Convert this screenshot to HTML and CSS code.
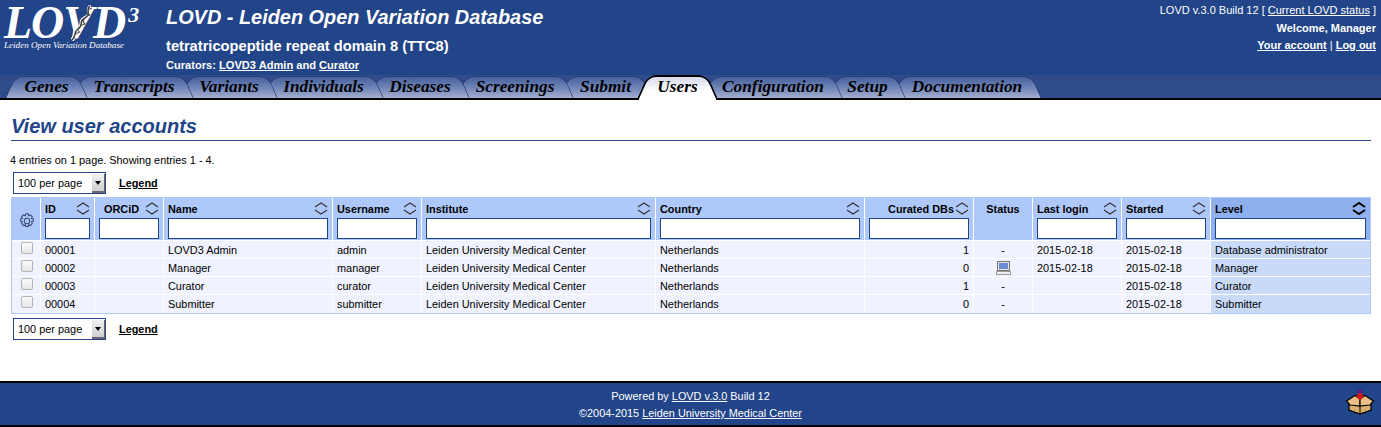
FILE: index.html
```html
<!DOCTYPE html>
<html lang="en">
<head>
    <meta charset="UTF-8">
    <title>LOVD - Leiden Open Variation Database</title>
    <link rel="stylesheet" href="styles.css">
</head>
<body>
    <div class="header">
        <div class="logo">
            <div class="logo-word">LOVD<sup class="logo-three">3</sup></div>
            <div class="logo-sub">Leiden Open Variation Database</div>
            <svg class="logo-helix" width="24" height="36" viewBox="0 0 24 36">
                <path d="M21 1 C15 5 24 9 15 13 C8 16 15 21 8 24 C2 27 7 31 2 35" fill="none" stroke="#fff" stroke-width="4"/>
                <path d="M20 1 C15 5 22 9 15 13 C8 16 14 21 8 24 C3 27 7 31 2 35" fill="none" stroke="#333" stroke-width="1.4"/>
                <path d="M22 3 C17 4 17 9 20 10 C13 12 12 17 15 19 C8 21 6 26 10 27 C5 28 3 31 4 34" fill="none" stroke="#555" stroke-width="1.2"/>
            </svg>
        </div>
        <div class="project">
            <h1>LOVD - Leiden Open Variation Database</h1>
            <h2>tetratricopeptide repeat domain 8 (TTC8)</h2>
            <div class="curators">Curators: <a href="#">LOVD3 Admin</a> and <a href="#">Curator</a></div>
        </div>
        <div class="account">
            <div class="version">LOVD v.3.0 Build 12 [ <a href="#">Current LOVD status</a> ]</div>
            <div class="strong">Welcome, Manager</div>
            <div class="strong"><a href="#">Your account</a> <span class="thin">|</span> <a href="#">Log out</a></div>
        </div>
    </div>

    <div class="tabbar">
        <div class="tabs">
            <a class="tab" href="#"><span>Genes</span></a>
            <a class="tab" href="#"><span>Transcripts</span></a>
            <a class="tab" href="#"><span>Variants</span></a>
            <a class="tab" href="#"><span>Individuals</span></a>
            <a class="tab" href="#"><span>Diseases</span></a>
            <a class="tab" href="#"><span>Screenings</span></a>
            <a class="tab" href="#"><span>Submit</span></a>
            <a class="tab active" href="#"><span>Users</span></a>
            <a class="tab" href="#"><span>Configuration</span></a>
            <a class="tab" href="#"><span>Setup</span></a>
            <a class="tab" href="#"><span>Documentation</span></a>
        </div>
    </div>

    <div class="main">
        <h3 class="page-title">View user accounts</h3>
        <div class="entries">4 entries on 1 page. Showing entries 1 - 4.</div>

        <div class="pager">
            <div class="select"><span class="select-text">100 per page</span><span class="select-arrow"></span></div>
            <a class="legend" href="#">Legend</a>
        </div>

        <div class="table-wrap">
            <table class="data">
                <colgroup>
                    <col class="c-check"><col class="c-id"><col class="c-orcid"><col class="c-name"><col class="c-user">
                    <col class="c-inst"><col class="c-country"><col class="c-dbs"><col class="c-status"><col class="c-login">
                    <col class="c-started"><col class="c-level">
                </colgroup>
                <thead>
                    <tr>
                        <th class="gear-cell">
                            <svg width="16" height="16" viewBox="0 0 20 20">
                                <path d="M8.5 1 h3 l.5 2.4 2.2-1 2.4 2.4-1 2.2 2.4.5 v3 l-2.4.6 1 2.2-2.4 2.4-2.2-1-.5 2.3 h-3 l-.6-2.3-2.2 1-2.4-2.4 1-2.2-2.3-.6 v-3 l2.3-.5-1-2.2 2.4-2.4 2.2 1z" fill="none" stroke="#3a4a78" stroke-width="1.3"/>
                                <circle cx="10" cy="10" r="3.4" fill="none" stroke="#3a4a78" stroke-width="1.3"/>
                            </svg>
                        </th>
                        <th><div class="head"><span>ID</span><svg class="sort" viewBox="0 0 14 13"><path d="M1 5 L7 1 L13 5 M1 8 L7 12 L13 8" fill="none" stroke="#333" stroke-width="1.1"/></svg></div><input class="filter" type="text"></th>
                        <th class="indent"><div class="head"><span>ORCiD</span><svg class="sort" viewBox="0 0 14 13"><path d="M1 5 L7 1 L13 5 M1 8 L7 12 L13 8" fill="none" stroke="#333" stroke-width="1.1"/></svg></div><input class="filter" type="text"></th>
                        <th><div class="head"><span>Name</span><svg class="sort" viewBox="0 0 14 13"><path d="M1 5 L7 1 L13 5 M1 8 L7 12 L13 8" fill="none" stroke="#333" stroke-width="1.1"/></svg></div><input class="filter" type="text"></th>
                        <th><div class="head"><span>Username</span><svg class="sort" viewBox="0 0 14 13"><path d="M1 5 L7 1 L13 5 M1 8 L7 12 L13 8" fill="none" stroke="#333" stroke-width="1.1"/></svg></div><input class="filter" type="text"></th>
                        <th><div class="head"><span>Institute</span><svg class="sort" viewBox="0 0 14 13"><path d="M1 5 L7 1 L13 5 M1 8 L7 12 L13 8" fill="none" stroke="#333" stroke-width="1.1"/></svg></div><input class="filter" type="text"></th>
                        <th><div class="head"><span>Country</span><svg class="sort" viewBox="0 0 14 13"><path d="M1 5 L7 1 L13 5 M1 8 L7 12 L13 8" fill="none" stroke="#333" stroke-width="1.1"/></svg></div><input class="filter" type="text"></th>
                        <th><div class="head head-right"><span>Curated DBs</span><svg class="sort" viewBox="0 0 14 13"><path d="M1 5 L7 1 L13 5 M1 8 L7 12 L13 8" fill="none" stroke="#333" stroke-width="1.1"/></svg></div><input class="filter" type="text"></th>
                        <th class="status-head"><div class="head head-center"><span>Status</span></div></th>
                        <th><div class="head"><span>Last login</span><svg class="sort" viewBox="0 0 14 13"><path d="M1 5 L7 1 L13 5 M1 8 L7 12 L13 8" fill="none" stroke="#333" stroke-width="1.1"/></svg></div><input class="filter" type="text"></th>
                        <th><div class="head"><span>Started</span><svg class="sort" viewBox="0 0 14 13"><path d="M1 5 L7 1 L13 5 M1 8 L7 12 L13 8" fill="none" stroke="#333" stroke-width="1.1"/></svg></div><input class="filter" type="text"></th>
                        <th class="sorted"><div class="head"><span>Level</span><svg class="sort" viewBox="0 0 14 13"><path d="M1 5 L7 1 L13 5 M1 8 L7 12 L13 8" fill="none" stroke="#000" stroke-width="2"/></svg></div><input class="filter" type="text"></th>
                    </tr>
                </thead>
                <tbody>
                    <tr>
                        <td class="check"><input class="box" type="checkbox"></td>
                        <td>00001</td><td></td><td>LOVD3 Admin</td><td>admin</td>
                        <td>Leiden University Medical Center</td><td>Netherlands</td>
                        <td class="right">1</td><td class="center">-</td><td>2015-02-18</td><td>2015-02-18</td>
                        <td class="sorted-cell">Database administrator</td>
                    </tr>
                    <tr>
                        <td class="check"><input class="box" type="checkbox"></td>
                        <td>00002</td><td></td><td>Manager</td><td>manager</td>
                        <td>Leiden University Medical Center</td><td>Netherlands</td>
                        <td class="right">0</td>
                        <td class="center">
                            <svg class="online" width="15" height="14" viewBox="0 0 15 14">
                                <rect x="1.5" y=".5" width="12" height="9" fill="#e2e2e2" stroke="#777"/>
                                <rect x="3" y="2" width="9" height="6" fill="#6d8fd2"/>
                                <rect x=".5" y="10.5" width="14" height="3" fill="#eee" stroke="#999"/>
                            </svg>
                        </td>
                        <td>2015-02-18</td><td>2015-02-18</td>
                        <td class="sorted-cell">Manager</td>
                    </tr>
                    <tr>
                        <td class="check"><input class="box" type="checkbox"></td>
                        <td>00003</td><td></td><td>Curator</td><td>curator</td>
                        <td>Leiden University Medical Center</td><td>Netherlands</td>
                        <td class="right">1</td><td class="center">-</td><td></td><td>2015-02-18</td>
                        <td class="sorted-cell">Curator</td>
                    </tr>
                    <tr class="last">
                        <td class="check"><input class="box" type="checkbox"></td>
                        <td>00004</td><td></td><td>Submitter</td><td>submitter</td>
                        <td>Leiden University Medical Center</td><td>Netherlands</td>
                        <td class="right">0</td><td class="center">-</td><td></td><td>2015-02-18</td>
                        <td class="sorted-cell">Submitter</td>
                    </tr>
                </tbody>
            </table>
        </div>

        <div class="pager pager-bottom">
            <div class="select"><span class="select-text">100 per page</span><span class="select-arrow"></span></div>
            <a class="legend" href="#">Legend</a>
        </div>
    </div>

    <div class="footer">
        <div>Powered by <a href="#">LOVD v.3.0</a> Build 12</div>
        <div>©2004-2015 <a href="#">Leiden University Medical Center</a></div>
        <svg class="footer-box" width="28" height="26" viewBox="0 0 28 26">
            <path d="M9 6.5 H19 L14 11z" fill="#3a2a20" stroke="#000" stroke-width="1"/>
            <path d="M3 13 L14 17 L25 13 V21 L14 25 L3 21z" fill="#d9b070" stroke="#000" stroke-width="1.2"/>
            <path d="M.5 12 L9 6.5 L14 10 L14 17 L4 16z" fill="#e6c084" stroke="#000" stroke-width="1.2"/>
            <path d="M27.5 12 L19 6.5 L14 10 L14 17 L24 16z" fill="#e6c084" stroke="#000" stroke-width="1.2"/>
            <path d="M14 17 V25" stroke="#000" fill="none"/>
            <rect x="11.5" y="0" width="5" height="4" fill="#4a2a78"/>
            <rect x="12" y="4" width="4" height="3" fill="#d8131c"/>
            <path d="M9.5 6.5 H18.5 L14 12z" fill="#d8131c"/>
        </svg>
    </div>
</body>
</html>
```

FILE: styles.css
```css
html, body {
    margin: 0;
    padding: 0;
}
body {
    min-height: 100vh;
    display: flex;
    flex-direction: column;
    font-family: "Liberation Sans", Arial, sans-serif;
    font-size: 10.9px;
    color: #000;
    background: #fff;
}
a {
    color: inherit;
}

/* header */
.header {
    height: 75px;
    display: flex;
    background: #224488;
    color: #fff;
}
.logo {
    position: relative;
    width: 166px;
    flex: none;
    font-family: "Liberation Serif", serif;
    font-style: italic;
    padding: 5px 0 0 4px;
    box-sizing: border-box;
}
.logo-word {
    height: 36px;
    font-size: 46px;
    line-height: 36px;
    font-weight: bold;
    letter-spacing: -1px;
    white-space: nowrap;
}
.logo-three {
    font-size: 22px;
    line-height: 0;
    vertical-align: 16px;
    margin-left: 3px;
}
.logo-sub {
    font-size: 9.1px;
    line-height: 9px;
    white-space: nowrap;
}
.logo-helix {
    position: absolute;
    left: 70px;
    top: 5px;
}
.project {
    flex: 1;
}
.project h1 {
    margin: 5px 0 0;
    font-size: 19.9px;
    line-height: 24px;
    font-style: italic;
}
.project h2 {
    margin: 8px 0 0;
    font-size: 14.67px;
    line-height: 18px;
}
.curators {
    margin-top: 3px;
    font-size: 11.1px;
    font-weight: bold;
    line-height: 14px;
}
.account {
    padding: 2px 5px 0 0;
    font-size: 11px;
    text-align: right;
    line-height: 17.5px;
}
.strong {
    font-weight: bold;
}
.thin {
    font-weight: normal;
}

/* tabs */
.tabbar {
    height: 23px;
    background: #2f4c8d;
    border-bottom: 2px solid #000;
}
.tabs {
    display: grid;
    grid-template-columns: 68px 107px 83px 106px 87px 103px 78px 66px 125px 64px 135px;
    width: 1022px;
    padding-left: 12.5px;
    box-sizing: content-box;
}
.tab {
    position: relative;
    display: block;
    height: 23px;
    line-height: 24px;
    text-align: center;
    text-decoration: none;
    font-family: "Liberation Serif", serif;
    font-style: italic;
    font-weight: bold;
    font-size: 17.3px;
    color: #000;
}
.tab span {
    position: relative;
    z-index: 1;
}
.tab:nth-child(1) { z-index: 11; }
.tab:nth-child(2) { z-index: 10; }
.tab:nth-child(3) { z-index: 9; }
.tab:nth-child(4) { z-index: 8; }
.tab:nth-child(5) { z-index: 7; }
.tab:nth-child(6) { z-index: 6; }
.tab:nth-child(7) { z-index: 5; }
.tab:nth-child(8) { z-index: 12; }
.tab:nth-child(9) { z-index: 4; }
.tab:nth-child(10) { z-index: 3; }
.tab:nth-child(11) { z-index: 2; }
.tab::before,
.tab::after {
    content: "";
    position: absolute;
    top: 1px;
    bottom: 0;
    width: 60%;
    background: linear-gradient(#46609c, #6f83b6 50%, #a3aed0);
    border-top: 1px solid #2b3b6c;
}
.tab::before {
    left: -3px;
    border-left: 1px solid #2b3b6c;
    border-top-left-radius: 9px;
    transform: skewX(-24deg);
}
.tab::after {
    right: -2px;
    border-right: 1px solid #2b3b6c;
    border-top-right-radius: 9px;
    transform: skewX(24deg);
}
.tab.active::before,
.tab.active::after {
    bottom: -2px;
    top: 0;
    background: linear-gradient(#d5d9ea, #fff 60%);
    border-color: #000;
    border-top-width: 2px;
}
.tab.active::before { border-left-width: 2px; }
.tab.active::after { border-right-width: 2px; }

/* main */
.main {
    flex: 1;
    padding: 0 10px;
}
.page-title {
    margin: 14px 0 0 1px;
    height: 26px;
    font-size: 20px;
    line-height: 25px;
    font-style: italic;
    color: #224488;
    border-bottom: 1px solid #224488;
}
.entries {
    margin-top: 13px;
    line-height: 13px;
}
.pager {
    display: flex;
    align-items: center;
    gap: 13px;
    margin: 5px 0 0 3px;
    height: 22px;
}
.pager-bottom {
    margin-top: 4px;
}
.select {
    width: 93px;
    height: 22px;
    display: flex;
    box-sizing: border-box;
    border: 1px solid #224488;
    background: #fff;
}
.select-text {
    flex: 1;
    padding-left: 4px;
    line-height: 21px;
}
.select-arrow {
    position: relative;
    width: 12px;
    margin: 1px 0 0;
    background: linear-gradient(#f0f0f0, #cfcfcf);
    border-right: 1px solid #666;
    border-bottom: 2px solid #667;
}
.select-arrow::after {
    content: "";
    position: absolute;
    left: 3px;
    top: 7px;
    border: 3px solid transparent;
    border-top: 4px solid #000;
    border-bottom: 0;
}
.legend {
    font-weight: bold;
}

/* table */
.table-wrap {
    margin: 3px 0 0 1px;
    width: 1358px;
    border: 1px solid #afc8fa;
}
.data {
    width: 100%;
    table-layout: fixed;
    border-collapse: separate;
    border-spacing: 0;
}
.c-check { width: 29px; }
.c-id { width: 54px; }
.c-orcid { width: 69px; }
.c-name { width: 169px; }
.c-user { width: 89px; }
.c-inst { width: 234px; }
.c-country { width: 209px; }
.c-dbs { width: 109px; }
.c-status { width: 59px; }
.c-login { width: 89px; }
.c-started { width: 89px; }
.data th {
    height: 43px;
    box-sizing: border-box;
    padding: 4px 4px 0;
    vertical-align: top;
    background: #afc8fa;
    border-right: 1px solid #fff;
    border-bottom: 1px solid #fff;
    text-align: left;
}
.data th:last-child,
.data td:last-child {
    border-right: 0;
}
.data th.gear-cell {
    padding: 15px 0 0 7px;
}
.data th.indent {
    padding-left: 9px;
}
.data th.indent .filter {
    margin-left: -5px;
    width: calc(100% + 5px);
}
.data th.sorted {
    background: #8fb0ee;
}
.head {
    display: flex;
    justify-content: space-between;
    align-items: center;
    height: 14px;
    line-height: 14px;
}
.head-right {
    justify-content: flex-end;
    gap: 1px;
}
.head-center {
    justify-content: center;
}
.sort {
    width: 14px;
    height: 13px;
    margin-top: -2px;
    flex: none;
}
.filter {
    display: block;
    box-sizing: border-box;
    width: 100%;
    height: 21px;
    margin: 2px 0 0;
    padding: 0 2px;
    border: 1px solid #224488;
    border-radius: 0;
    background: #fff;
    outline: 0;
}
.data td {
    height: 18px;
    box-sizing: border-box;
    padding: 1px 4px 0;
    line-height: 14px;
    background: #f0f3ff;
    border-right: 1px solid #fff;
    border-bottom: 1px solid #fff;
    white-space: nowrap;
}
.data tr.last td {
    border-bottom: 0;
    padding-bottom: 1px;
}
.data td.sorted-cell {
    background: #c8daf7;
}
.data td.right {
    text-align: right;
}
.data td.center {
    text-align: center;
}
.data td.check {
    padding: 0 0 0 9px;
    vertical-align: top;
}
.box {
    appearance: none;
    display: block;
    width: 12px;
    height: 12px;
    margin: 1px 0 0;
    border: 1px solid #b4b4b4;
    border-radius: 2px;
    background: linear-gradient(#fafafa, #e6e6e6);
}
.online {
    display: block;
    margin: 0 auto;
}

/* footer */
.footer {
    position: relative;
    height: 34px;
    padding: 5px 0 3px;
    background: #224488;
    color: #fff;
    text-align: center;
    line-height: 17px;
    border-top: 2px solid #000;
    border-bottom: 2px solid #000;
}
.footer-box {
    position: absolute;
    right: 7px;
    top: 6px;
}
```
